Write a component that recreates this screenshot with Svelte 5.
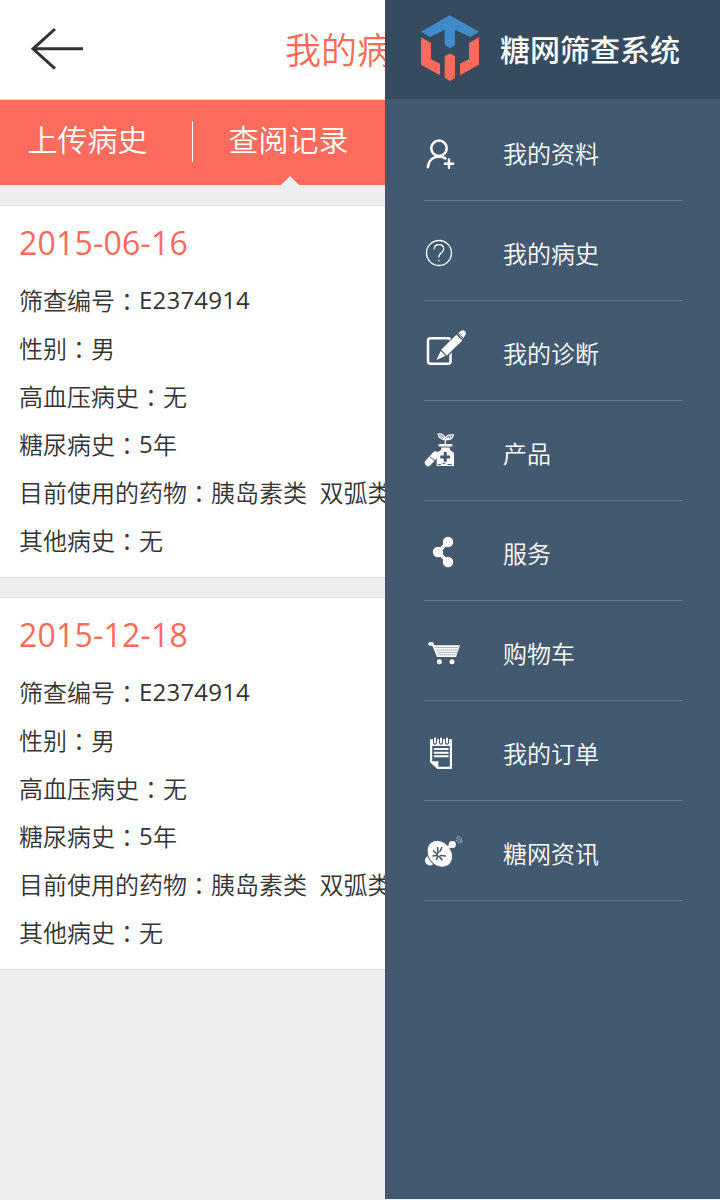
<script lang="ts">
  type Field = { label: string; latin?: string; value?: string };

  const fields: Field[] = [
    { label: "筛查编号", latin: "E2374914" },
    { label: "性别", value: "男" },
    { label: "高血压病史", value: "无" },
    { label: "糖尿病史", latin: "5", value: "年" },
    { label: "目前使用的药物", value: "胰岛素类  双弧类" },
    { label: "其他病史", value: "无" },
  ];

  const records = [
    { date: "2015-06-16", fields },
    { date: "2015-12-18", fields },
  ];

  const menu = [
    { icon: "profile", label: "我的资料" },
    { icon: "history", label: "我的病史" },
    { icon: "diagnosis", label: "我的诊断" },
    { icon: "product", label: "产品" },
    { icon: "service", label: "服务" },
    { icon: "cart", label: "购物车" },
    { icon: "order", label: "我的订单" },
    { icon: "news", label: "糖网资讯" },
  ];

  let activeTab = $state(1);
  const tabs = ["上传病史", "查阅记录"];
</script>

{#snippet menuIcon(name: string)}
  <svg class="menu-icon" viewBox="0 0 46 60" aria-hidden="true">
    {#if name === "profile"}
      <g class="line">
        <circle cx="15" cy="26.3" r="7.7" />
        <path d="M3.9 45.2C4.6 38.5 9 34.6 14.8 34.4c2.8 0 4.8.7 6.7 2.1M20.9 41.7h8.2M25 37.6v8.2" />
      </g>
    {:else if name === "history"}
      <g class="thin">
        <circle cx="15" cy="31" r="12.5" />
        <path d="M10.3 27.3c0-2.9 1.8-4.6 4.7-4.6s4.7 1.7 4.7 4.4c0 4.1-5 3.5-5 8.5" />
      </g>
      <circle cx="14.7" cy="38.6" r=".8" />
    {:else if name === "diagnosis"}
      <rect class="line" x="4" y="16.2" width="22.5" height="25.6" rx="2.5" />
      <path class="gap" d="M12.5 38l4-9.5L32 13l6 6-15.5 15.5z" />
      <path d="M12.5 38l4.2-9 4.9 4.8zM17.2 27.7L32.3 12.7l6 5.8L22.9 33.5zM33.5 11.6l3-2.4c1.5-1.2 3.3-1.1 4.5 0s1.1 3 0 4.2l-2.3 3.6z" />
      <path class="cut" d="M33.8 10.8l6.2 6.2" />
    {:else if name === "product"}
      <path class="thin" d="M21.3 22v-4.5c-4.2.2-6.4-1.7-7.1-5.5 4.1-.3 7 1.6 7.1 5.5.5-3.1 3-5 8-4.5-.6 3.3-3.3 5.2-8 4.5M16 13.5l5 3.7M27.2 14.5l-5.5 3" />
      <path d="M14.7 22h13.6v2.4H14.7zM17.3 25.5h8.5v2.2l4.2 3V44H12.7V30.7l4.6-3z" />
      <path class="cross" d="M21.2 30v9.8M16.3 34.9h9.8" />
      <path class="cut" d="M14 42.5h3m1.5-1.2h3m2 1.2h4" />
      <path class="pill" d="M4.2 40.8l7.3-8" />
      <path class="cut" d="M5.7 34.5l5.7 5" />
    {:else if name === "service"}
      <path class="link" d="M24 20L14 30l10 10" />
      <circle cx="24" cy="20" r="5.2" />
      <circle cx="14" cy="30" r="5.2" />
      <circle cx="24" cy="40" r="5.2" />
    {:else if name === "cart"}
      <path d="M5.4 20.3h3c.8 0 1.3 1 1.8 3H36L32 35H13L8.4 23.7H6c-2.2 0-2.2-3-.6-3.4z" />
      <path class="mesh" d="M11.5 25.5h22.6M12.5 28h21M13.5 30.4h19M14.3 32.8h17.4" />
      <circle cx="15.4" cy="39.7" r="2.5" />
      <circle cx="28" cy="39.7" r="2.5" />
    {:else if name === "order"}
      <path fill-rule="evenodd" d="M6 17.3h22V47H13.5L6 40.2zM8.2 24v15.2h6.2v5.5h11.4V24z" />
      <path d="M9.8 26h14.7v2H9.8zM9.8 29.7h14.7v2H9.8zM9.8 33.3h14.7v2H9.8z" />
      <path class="ring-gap" d="M11 16.5v4.3M17 16.5v4.3M23 16.5v4.3" />
      <path class="ring" d="M11 16.6v4M17 16.6v4M23 16.6v4" />
    {:else if name === "news"}
      <circle cx="6" cy="38.5" r="5" />
      <ellipse class="dish" cx="15.8" cy="31.8" rx="11.6" ry="14.4" transform="rotate(-38 15.8 31.8)" />
      <path class="cut wide" d="M14.3 33.2L9 28.5M14.3 33.2l-.9-8.2M14.3 33.2L8.5 34M14.3 33.2l-2.1 4.6M14.3 33.2l4.2 5M14.3 33.2l7.5.8M14.5 33L18 25" />
      <path class="line" d="M15 32.5L27 23.3" />
      <circle cx="28.3" cy="22.5" r="3.6" />
      <path class="wave" d="M31.6 18.3c2.2.1 3 1.1 3 2.9M32 16.2c3.2.2 4.8 2 4.7 5M33 14.3c3.2.4 5.1 2.6 5 6.2" />
    {/if}
  </svg>
{/snippet}

<div class="screen">
  <main class="page">
    <header class="top-bar">
      <button class="back" aria-label="返回">
        <svg viewBox="0 0 54 44">
          <path d="M25 2L3 21.8 25 41.6M2.5 21.8H53" />
        </svg>
      </button>
      <h1>我的病史</h1>
    </header>

    <nav class="tabs">
      {#each tabs as tab, i (tab)}
        <button class="tab" class:active={activeTab === i} onclick={() => (activeTab = i)}>
          {tab}
        </button>
      {/each}
    </nav>

    {#each records as record (record.date)}
      <section class="record">
        <h2>{record.date}</h2>
        {#each record.fields as field (field.label)}
          <p>{field.label}<span class="colon">：</span><span class="latin">{field.latin ?? ""}</span>{field.value ?? ""}</p>
        {/each}
      </section>
    {/each}
  </main>

  <aside class="drawer">
    <div class="brand">
      <svg class="logo" viewBox="60 42 180 204" aria-hidden="true">
        <path fill="#428bca" d="M149 46l88 49-26 16-46-22v46l-16 10-15-10V89l-44 22-27-16z" />
        <path
          fill="#fe6a5a"
          d="M63 112l30 17v48l27 14v35l-57-32zM237 112l-30 17v48l-27 14v35l57-32zM150 160l15 9v64l-15 10-16-10v-64z"
        />
      </svg>
      <span class="brand-name">糖网筛查系统</span>
    </div>
    <ul>
      {#each menu as item (item.icon)}
        <li>
          {@render menuIcon(item.icon)}
          <span>{item.label}</span>
        </li>
      {/each}
    </ul>
  </aside>
</div>

<style>
  :global(body) {
    margin: 0;
    background: #eee;
  }

  .screen {
    position: relative;
    width: 720px;
    height: 1200px;
    overflow: hidden;
    background: #eee;
    font-family: "Open Sans", "Noto Sans CJK SC", sans-serif;
    color: #333;
  }

  button {
    border: none;
    background: none;
    padding: 0;
    font: inherit;
    color: inherit;
    cursor: pointer;
  }

  .top-bar {
    display: grid;
    grid-template-columns: 54px 1fr 54px;
    align-items: center;
    height: 99px;
    padding: 0 36px 0 30px;
    background: #fff;
    border-bottom: 1px solid #e3dcdb;
  }

  .back svg {
    display: block;
    width: 54px;
    height: 44px;
    margin-top: -2px;
    fill: none;
    stroke: #333;
    stroke-width: 3;
  }

  h1 {
    margin: 2px 0 0;
    text-align: center;
    font-size: 36px;
    line-height: 54px;
    font-weight: 350;
    color: #fe6a5a;
  }

  .tabs {
    display: flex;
    height: 85px;
    background: #fd6b5c;
    color: #fff;
  }

  .tab {
    position: relative;
    width: 193px;
    padding: 0 0 10px;
    text-align: center;
    text-indent: -18px;
    font-size: 30px;
    font-weight: 350;
    white-space: nowrap;
  }

  .tab + .tab {
    text-indent: -2px;
  }

  .tab + .tab::before {
    content: "";
    position: absolute;
    left: -1px;
    top: 21px;
    width: 1px;
    height: 41px;
    background: #fff;
  }

  .tab.active::after {
    content: "";
    position: absolute;
    left: 50%;
    bottom: 0;
    margin-left: -9px;
    border: 9px solid transparent;
    border-top: 0;
    border-bottom-color: #eee;
  }

  .record {
    box-sizing: border-box;
    height: 373px;
    margin: 20px 0 19px;
    padding: 13px 19px 0;
    background: #fff;
    border: solid #ddd;
    border-width: 1px 0;
  }

  .record + .record {
    margin-top: 0;
  }

  h2 {
    margin: 0 0 10px;
    font-size: 32px;
    line-height: 48px;
    font-weight: 400;
    letter-spacing: 0.2px;
    color: #fe6a5a;
  }

  p {
    margin: 0;
    height: 48px;
    font-size: 24px;
    line-height: 48px;
    font-weight: 350;
    white-space: pre;
  }

  .colon {
    font-family: "Noto Sans CJK TC", sans-serif;
    line-height: 1;
    vertical-align: -1px;
  }

  .latin {
    font-weight: 400;
    line-height: 1;
    letter-spacing: 0.2px;
    vertical-align: 1px;
  }

  .drawer {
    position: absolute;
    top: 0;
    right: 0;
    width: 335px;
    height: 1199px;
    background: #43596f;
    color: #fff;
  }

  .brand {
    display: flex;
    align-items: center;
    gap: 20px;
    box-sizing: border-box;
    height: 99px;
    padding: 0 0 3px 35px;
    background: #374b5e;
  }

  .logo {
    width: 60px;
    height: 68px;
  }

  .brand-name {
    padding-top: 4px;
    font-size: 30px;
    line-height: 40px;
    font-weight: 500;
    white-space: nowrap;
  }

  ul {
    list-style: none;
    margin: 0;
    padding: 2px 37px 0 39px;
  }

  li {
    display: flex;
    gap: 33px;
    height: 99px;
    border-bottom: 1px solid #64768a;
    font-size: 24px;
    font-weight: 350;
    line-height: 106px;
  }

  .menu-icon {
    flex: none;
    width: 46px;
    height: 60px;
    margin-top: 21px;
    fill: #fff;
  }

  .line {
    fill: none;
    stroke: #fff;
    stroke-width: 2.5;
    stroke-linecap: round;
  }

  .thin {
    fill: none;
    stroke: #fff;
    stroke-width: 1.3;
  }

  .gap {
    fill: #43596f;
    stroke: #43596f;
    stroke-width: 1.5;
  }

  .cut {
    fill: none;
    stroke: #43596f;
    stroke-width: 1;
  }

  .cut.wide {
    stroke-width: 1.6;
  }

  .cross {
    stroke: #43596f;
    stroke-width: 3;
  }

  .pill {
    stroke: #fff;
    stroke-width: 6.8;
    stroke-linecap: round;
  }

  .link {
    fill: none;
    stroke: #fff;
    stroke-width: 3.6;
  }

  .mesh {
    stroke: #43596f;
    stroke-width: 0.9;
    stroke-dasharray: 1 1;
  }

  .ring-gap {
    stroke: #43596f;
    stroke-width: 4;
    stroke-linecap: round;
  }

  .ring {
    stroke: #fff;
    stroke-width: 2;
    stroke-linecap: round;
  }

  .dish {
    stroke: #43596f;
    stroke-width: 1;
  }

  .wave {
    fill: none;
    stroke: #b4bec8;
    stroke-width: 0.8;
  }
</style>
